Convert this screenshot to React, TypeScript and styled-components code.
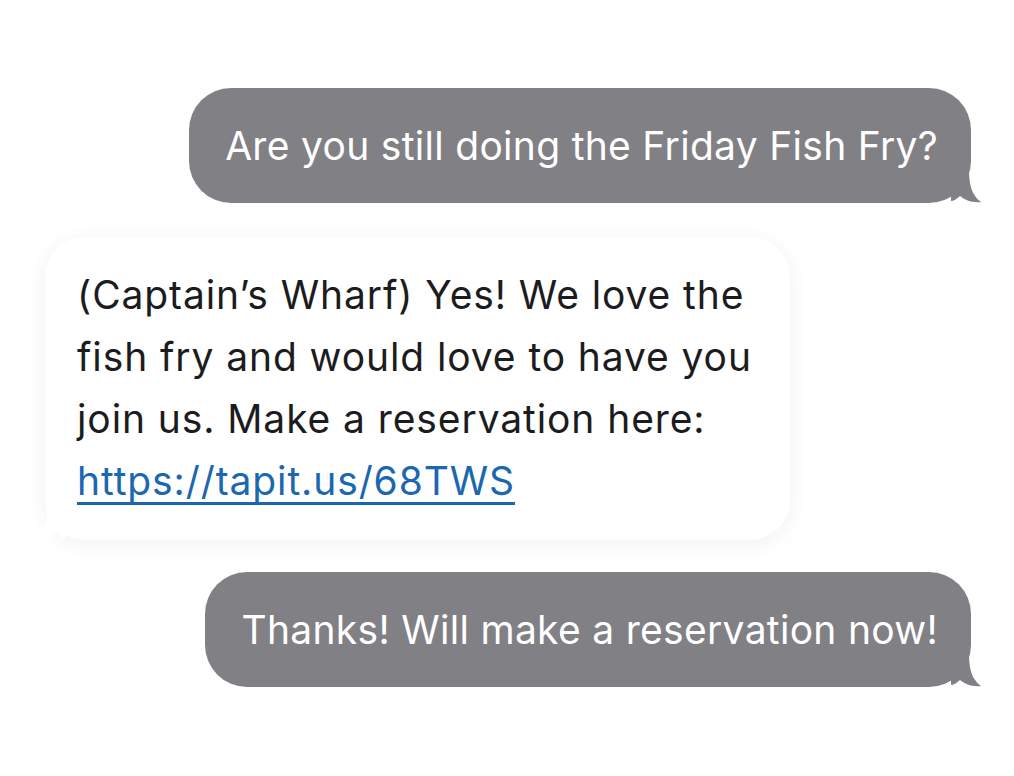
import styled, { createGlobalStyle } from "styled-components";

const GlobalStyle = createGlobalStyle`
  html, body {
    margin: 0;
    padding: 0;
    background: #ffffff;
  }
`;

const Thread = styled.div`
  display: flex;
  flex-direction: column;
  width: 1014px;
  height: 776px;
  box-sizing: border-box;
  padding: 88px 43px 0 45px;
  font-family: Inter, "Noto Sans", sans-serif;
`;

const Row = styled.div<{ $out?: boolean }>`
  display: flex;
  justify-content: ${(p) => (p.$out ? "flex-end" : "flex-start")};
  margin-bottom: ${(p) => (p.$out ? "34px" : "32px")};
`;

const Bubble = styled.div<{ $out?: boolean }>`
  position: relative;
  box-sizing: border-box;
  background: ${(p) => (p.$out ? "#818085" : "#ffffff")};
  color: ${(p) => (p.$out ? "#ffffff" : "#1c1c1e")};
  border-radius: ${(p) => (p.$out ? "42px" : "40px")};
  padding: ${(p) => (p.$out ? "34px 33px 34px 36px" : "27px 32px 28px 32px")};
  font-size: 39px;
  line-height: ${(p) => (p.$out ? "47px" : "62px")};
  letter-spacing: ${(p) => (p.$out ? "0.3px" : "0.9px")};
  max-width: ${(p) => (p.$out ? "820px" : "745px")};
  box-shadow: ${(p) => (p.$out ? "none" : "0 4px 22px rgba(0, 0, 0, 0.06)")};
`;

const Tail = styled.svg<{ $out?: boolean }>`
  position: absolute;
  bottom: 0;
  width: 30px;
  height: 34px;
  ${(p) => (p.$out ? "right: -10px;" : "left: -10px; transform: scaleX(-1);")}
`;

const Link = styled.a`
  color: #1b67b0;
  text-decoration: underline;
  text-decoration-thickness: 3px;
  text-underline-offset: 7px;
  text-decoration-skip-ink: none;
`;

function BubbleTail({ out, color }: { out?: boolean; color: string }) {
  return (
    <Tail $out={out} viewBox="0 0 30 34">
      <path
        d="M0 0 L18 0 C18 14 20 26 30 33 C21 34 14 31 9 27 C6 30 2 32 0 32 Z"
        fill={color}
      />
    </Tail>
  );
}

export default function App() {
  return (
    <>
      <GlobalStyle />
      <Thread>
        <Row $out>
          <Bubble $out>
            Are you still doing the Friday Fish Fry?
            <BubbleTail out color="#818085" />
          </Bubble>
        </Row>
        <Row>
          <Bubble>
            (Captain’s Wharf) Yes! We love the fish fry and would love to have
            you join us. Make a reservation here:{" "}
            <Link href="#">https://tapit.us/68TWS</Link>
            <BubbleTail color="#ffffff" />
          </Bubble>
        </Row>
        <Row $out>
          <Bubble $out>
            Thanks! Will make a reservation now!
            <BubbleTail out color="#818085" />
          </Bubble>
        </Row>
      </Thread>
    </>
  );
}
